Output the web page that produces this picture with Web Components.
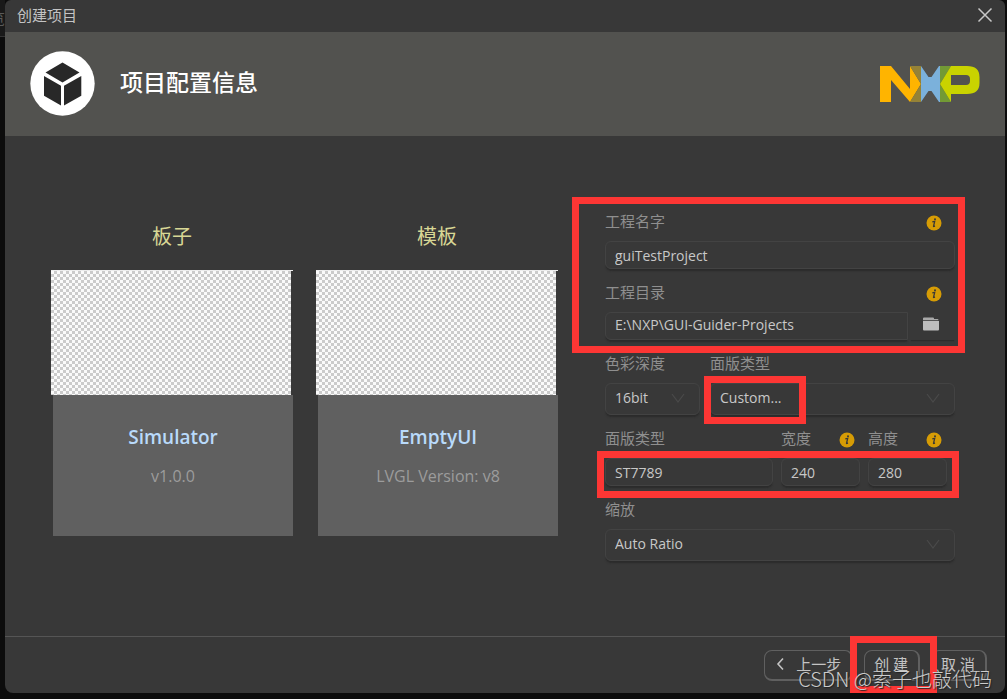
<!DOCTYPE html>
<html lang="zh-CN">
<head>
<meta charset="utf-8">
<title>创建项目</title>
<style>
html, body { height: 100%; margin: 0; }
body {
  background: #0c0c0c;
  font: 15px/20px "Open Sans", "Noto Sans CJK SC", sans-serif;
  color: #c4c4c4;
}
</style>
</head>
<body>
<project-dialog></project-dialog>
<script>
function define(name, html, setup) {
  const template = document.createElement('template');
  template.innerHTML = '<style>*{box-sizing:border-box}:host([hidden]){display:none}</style>' + html;
  customElements.define(name, class extends HTMLElement {
    constructor() {
      super();
      this.attachShadow({ mode: 'open' }).append(template.content.cloneNode(true));
    }
    connectedCallback() {
      if (setup) setup(this, this.shadowRoot);
    }
  });
}

// Red frame drawn around whatever its parent holds
define('mark-frame', `
<style>
:host { position: absolute; border: 7px solid #fd3634; pointer-events: none; z-index: 2; box-sizing: border-box; }
</style>`);

define('info-dot', `
<style>
:host { display: block; width: 16px; height: 16px; }
svg { display: block; }
</style>
<svg width="16" height="16" viewBox="0 0 16 16" role="img" aria-label="info">
  <circle cx="8" cy="8" r="7.5" fill="#d69c05"/>
  <circle cx="9" cy="4.2" r="1" fill="#383838"/>
  <path d="M6.3 6.9 8.7 6.4 7.5 11.3Q7.4 11.9 8.9 10.9" fill="none" stroke="#383838" stroke-width="1.3"/>
</svg>`);

define('form-field', `
<style>
:host { display: block; min-width: 0; position: relative; }
.head { display: flex; height: 20px; margin-bottom: 9px; justify-content: space-between; padding-right: var(--info-inset, 13px); }
label { color: #8f8f8f; white-space: nowrap; line-height: 18px; }
info-dot { margin-top: 3px; }
.line { display: flex; gap: 2px; }
.box { position: relative; flex: 1; min-width: 0; }
input, select {
  display: block; width: 100%; height: 28px; margin: 0; padding: 0 9px;
  font: inherit; font-size: 14px; color: #c8c8c8; background: #383838;
  border: 1px solid #434343; border-radius: 6px; outline: 0;
  box-shadow: 0 2px 1px -1px #2c2c2c, 0 3px 2px -1px #2c2c2c;
}
select { height: 32px; padding-bottom: 3px; appearance: none; }
.box svg { position: absolute; right: 15px; top: 10px; }
:host([folder]) input { border-radius: 6px 0 0 6px; padding-bottom: 3px; }
button { width: 45px; height: 28px; padding: 0 0 4px 13px; border: 0; background: none; box-shadow: 0 2px 1px -1px #2c2c2c; }
button svg { display: block; }
</style>
<div class="head"><label for="c"></label></div>
<div class="line"><div class="box"></div></div>
<slot></slot>`, (host, root) => {
  root.querySelector('label').textContent = host.getAttribute('label');
  const box = root.querySelector('.box');
  if (host.hasAttribute('info')) root.querySelector('.head').append(document.createElement('info-dot'));
  if (host.hasAttribute('select')) {
    box.innerHTML = '<select id="c"><option></option></select><svg width="14" height="11" viewBox="0 0 14 11"><path d="M1 1 7 9 13 1" fill="none" stroke="#4a4a4a" stroke-width="1.2"/></svg>';
    box.querySelector('option').textContent = host.getAttribute('value');
  } else {
    box.innerHTML = '<input id="c" type="text">';
    box.firstChild.value = host.getAttribute('value');
  }
  if (host.hasAttribute('folder')) {
    box.insertAdjacentHTML('afterend', '<button type="button" aria-label="browse"><svg width="16" height="14" viewBox="0 0 16 14"><path d="M0 3.2V1.5Q0 .5 1 .5H10Q11 .5 11 1.5V2H14.5Q15.5 2 15.5 3.2Z" fill="#a9a9a9"/><path d="M0 4H16V12.5Q16 13.5 15 13.5H1Q0 13.5 0 12.5Z" fill="#bdbdbd"/></svg></button>');
  }
});

define('choice-card', `
<style>
:host { display: block; min-width: 0; text-align: center; }
h2 { margin: 0 0 16px; padding-top: 7px; font-size: 20px; line-height: 35px; font-weight: 400; color: #d8d795; }
.picture {
  height: 124px; margin-right: 2px;
  background: repeating-conic-gradient(#cbcbcb 0 25%, #fafafa 0 50%) 0 0 / 6px 6px;
}
.rule { height: 1px; background: #eee; }
.body { margin-left: 2px; height: 141px; padding-top: 28px; background: #606060; }
.name { margin: 0 0 12px; font-size: 19px; line-height: 28px; font-weight: 600; color: #b9dafb; }
.note { margin: 0; font-size: 16px; line-height: 26px; color: #9c9c9c; }
</style>
<h2><slot name="title"></slot></h2>
<div class="rule"></div>
<div class="picture"></div>
<div class="body"><p class="name"><slot name="name"></slot></p><p class="note"><slot name="note"></slot></p></div>`);

define('project-form', `
<style>
:host { display: flex; flex-direction: column; gap: 14px; min-width: 0; }
.group, .row { position: relative; }
.group { display: flex; flex-direction: column; gap: 14px; }
.row { display: grid; }
.color { grid-template-columns: 95fr 245fr; gap: 10px; }
.panel { grid-template-columns: 168fr 79fr 79fr; gap: 8px; padding-right: 8px; --info-inset: 5px; }
.group > mark-frame { inset: -15px -10px -13px -33px; }
.color mark-frame { left: -6px; top: 22px; width: 102px; height: 48px; }
.panel > mark-frame { inset: 22px -4px -12px -8px; }
</style>
<div class="group">
  <form-field label="工程名字" value="guiTestProject" info></form-field>
  <form-field label="工程目录" value="E:\\NXP\\GUI-Guider-Projects" info folder></form-field>
  <mark-frame></mark-frame>
</div>
<div class="row color">
  <form-field label="色彩深度" value="16bit" select></form-field>
  <form-field label="面版类型" value="Custom..." select><mark-frame></mark-frame></form-field>
</div>
<div class="row panel">
  <form-field label="面版类型" value="ST7789"></form-field>
  <form-field label="宽度" value="240" info></form-field>
  <form-field label="高度" value="280" info></form-field>
  <mark-frame></mark-frame>
</div>
<form-field label="缩放" value="Auto Ratio" select></form-field>`);

define('dialog-button', `
<style>
:host { display: block; position: relative; }
button {
  display: flex; align-items: center; gap: 8px; height: 31px; padding: 0 10px 2px 9px;
  font: inherit; color: #c4c4c4; background: #383838; white-space: pre;
  border: 1px solid #606060; border-bottom-width: 2px; border-right-width: 2px; border-radius: 8px;
}
</style>
<button type="button"><slot></slot></button><slot name="mark"></slot>`);

define('project-dialog', `
<style>
:host { position: relative; min-height: 100vh; padding: 0 2px 6px 5px; box-sizing: border-box; display: flex; }
.behind { position: absolute; left: 0; top: 0; width: 5px; height: 37px; overflow: hidden; background: #191919; border-bottom: 1px solid #333; color: #5a5a5a; display: flex; justify-content: flex-end; padding-top: 8px; }
.dialog { position: relative; flex: 1; min-width: 0; display: flex; flex-direction: column; background: #383838; border-radius: 6px 6px 8px 8px; }
.bar { display: flex; align-items: center; justify-content: space-between; height: 32px; padding: 0 12px 2px; }
.bar button { display: block; padding: 0; border: 0; background: none; }
.bar svg, header svg { display: block; }
header { display: flex; align-items: center; height: 104px; padding: 0 25px; gap: 25px; background: #52524f; }
h1 { flex: 1; margin: 0; padding-bottom: 4px; font-size: 23px; line-height: 32px; font-weight: 500; color: #fff; }
main { flex: 1; display: grid; grid-template-columns: 242fr 242fr 374fr; column-gap: 23px; align-items: start; padding: 76px 50px 74px 46px; }
project-form { margin-left: 24px; }
footer { display: flex; align-items: flex-start; justify-content: flex-end; gap: 11px; height: 57px; padding: 13px 18px 0; border-top: 1px solid #555; }
mark-frame { inset: -14px -17px -12px -14px; }
.credit { position: absolute; right: 13px; bottom: 0; z-index: 3; font-size: 20px; line-height: 28px; font-family: "Noto Sans CJK SC", sans-serif; font-weight: 300; color: #ccc; text-shadow: 1px 1px 1px #222; white-space: nowrap; }
</style>
<div class="behind">览</div>
<div class="dialog">
  <div class="bar">
    <span>创建项目</span>
    <button type="button" aria-label="关闭"><svg width="16" height="16" viewBox="0 0 16 16"><path d="M1.5 1.5 14.5 14.5M14.5 1.5 1.5 14.5" stroke="#c8c8c8" stroke-width="1.5"/></svg></button>
  </div>
  <header>
    <svg width="65" height="66" viewBox="0 0 65 66"><circle cx="32.5" cy="32.5" r="32.2" fill="#fff"/><path d="M32.5 11.5 49.5 21.5 32.5 31.5 15.5 21.5ZM14 25 31 34.7V54.5L14 44.8ZM51.3 25V44.8L34 54.5V34.7Z" fill="#282828"/></svg>
    <h1>项目配置信息</h1>
    <svg width="100" height="36" viewBox="0 0 100 36" role="img" aria-label="NXP">
      <path d="M0 0H11L30 23V0L41 18 30 36 11 14V36H0Z" fill="#ffb400"/>
      <path d="M30 0H41V18ZM41 18V36H30Z" fill="#958237"/>
      <path d="M41 0 48.5 11H51.5L59 0H60V36H59L51.5 25H48.5L41 36Z" fill="#7bb1db"/>
      <path d="M60 0H71L60 18ZM60 18 71 36H60Z" fill="#729a35"/>
      <path d="M71 0H87Q99.5 0 99.5 11V17Q99.5 28 87 28H71V36L60 18ZM71 9V19H86Q90 19 90 15V13Q90 9 86 9Z" fill="#c9d300" fill-rule="evenodd"/>
    </svg>
  </header>
  <main>
    <choice-card><span slot="title">板子</span><span slot="name">Simulator</span><span slot="note">v1.0.0</span></choice-card>
    <choice-card><span slot="title">模板</span><span slot="name">EmptyUI</span><span slot="note">LVGL Version: v8</span></choice-card>
    <project-form></project-form>
  </main>
  <footer>
    <dialog-button><svg width="14" height="14" viewBox="0 0 14 14"><path d="M9 1.5 4 7 9 12.5" fill="none" stroke="#c4c4c4" stroke-width="1.6"/></svg>上一步</dialog-button>
    <dialog-button>创 建<mark-frame slot="mark"></mark-frame></dialog-button>
    <dialog-button>取 消</dialog-button>
  </footer>
  <div class="credit">CSDN @索子也敲代码</div>
</div>`);
</script>
</body>
</html>
